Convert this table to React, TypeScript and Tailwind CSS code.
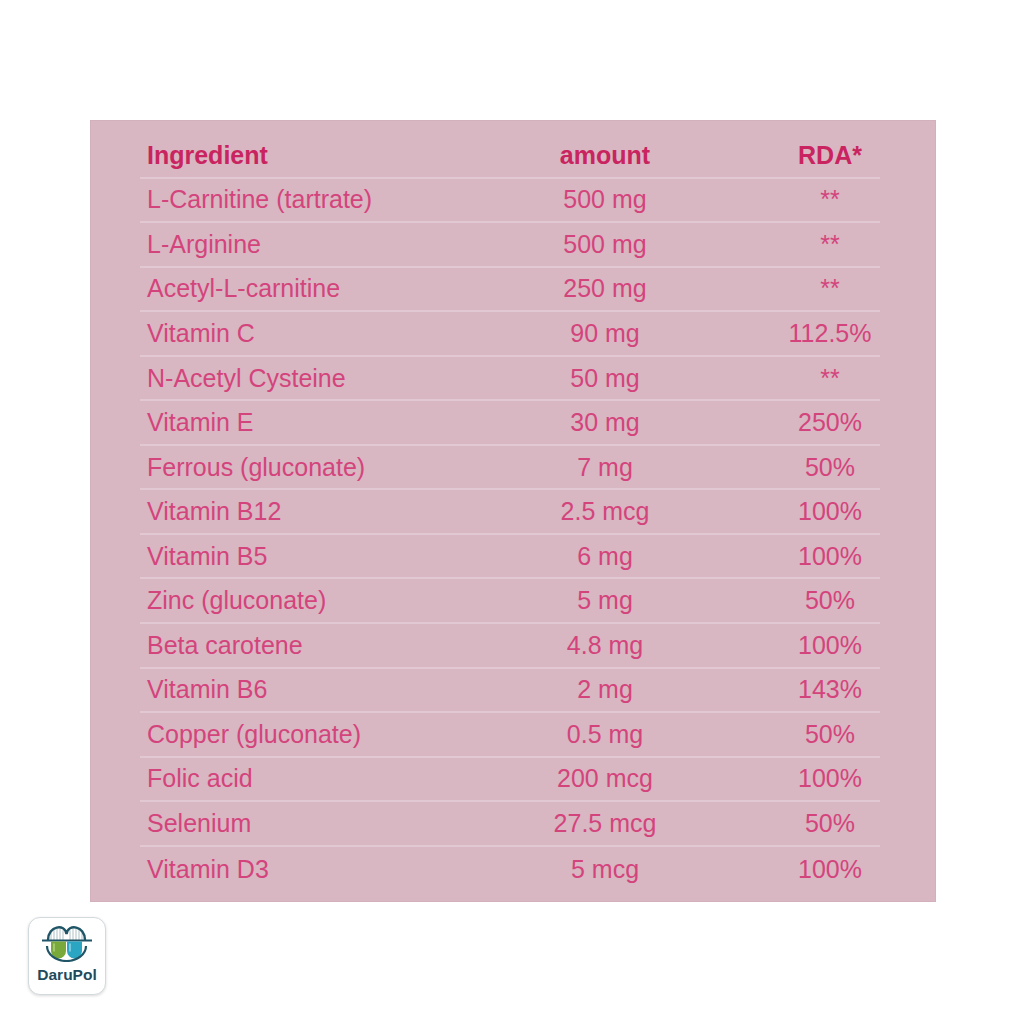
const rows: [string, string, string][] = [
  ["L-Carnitine (tartrate)", "500 mg", "**"],
  ["L-Arginine", "500 mg", "**"],
  ["Acetyl-L-carnitine", "250 mg", "**"],
  ["Vitamin C", "90 mg", "112.5%"],
  ["N-Acetyl Cysteine", "50 mg", "**"],
  ["Vitamin E", "30 mg", "250%"],
  ["Ferrous (gluconate)", "7 mg", "50%"],
  ["Vitamin B12", "2.5 mcg", "100%"],
  ["Vitamin B5", "6 mg", "100%"],
  ["Zinc (gluconate)", "5 mg", "50%"],
  ["Beta carotene", "4.8 mg", "100%"],
  ["Vitamin B6", "2 mg", "143%"],
  ["Copper (gluconate)", "0.5 mg", "50%"],
  ["Folic acid", "200 mcg", "100%"],
  ["Selenium", "27.5 mcg", "50%"],
  ["Vitamin D3", "5 mcg", "100%"],
];

function Row({ cells, head, last }: { cells: [string, string, string]; head?: boolean; last?: boolean }) {
  return (
    <div
      className={`flex items-center h-[44.56px] w-[740px] ${last ? "" : "border-b-2 border-[#e1c8d2]"} ${
        head ? "font-bold text-[#c9245f]" : "text-[#d4447c]"
      }`}
    >
      <div className="w-[390px] pl-[7px] whitespace-nowrap">{cells[0]}</div>
      <div className="w-[150px] text-center whitespace-nowrap">{cells[1]}</div>
      <div className="w-[100px] ml-[100px] text-center whitespace-nowrap">{cells[2]}</div>
    </div>
  );
}

function Logo() {
  const cables = [10, 13, 16, 19, 22, 29, 32, 35, 38, 41];
  return (
    <div className="w-[78px] h-[78px] rounded-[12px] bg-white border border-[#d3dadd] shadow-[0_1px_3px_rgba(0,0,0,0.15)] flex flex-col items-center pt-[6px]">
      <svg width="52" height="38" viewBox="0 0 52 38">
        {cables.map((x) => {
          const c = x < 25.5 ? 16.25 : 34.75;
          const top = 4 + ((x - c) * (x - c)) / 14;
          return <path key={x} d={`M${x} 16 V${top}`} stroke="#9aaeb4" strokeWidth="0.8" />;
        })}
        <path d="M7 16 C7 2 24 -1 25.5 10 C27 -1 44 2 44 16" fill="none" stroke="#1f5566" strokeWidth="2.4" />
        <path d="M1 16.5 H51" stroke="#1f5566" strokeWidth="2" />
        <path d="M10 17.5 V27 A7.5 7.5 0 0 0 25 27 V17.5 Z" fill="#78a93a" />
        <path d="M26 17.5 V27 A7.5 7.5 0 0 0 41 27 V17.5 Z" fill="#2aa6c3" />
        <path d="M13 20 V27" stroke="#b7d48a" strokeWidth="1.4" strokeLinecap="round" />
        <path d="M29 20 V27" stroke="#98d8e8" strokeWidth="1.4" strokeLinecap="round" />
        <path d="M6 22 A19.5 15 0 0 0 45 22" fill="none" stroke="#1f5566" strokeWidth="2.2" />
      </svg>
      <div className="font-['Liberation_Sans',Arial,sans-serif] font-bold text-[15.5px] leading-none text-[#1e4b5c] mt-[5px]">
        DaruPol
      </div>
    </div>
  );
}

export default function App() {
  return (
    <div className="w-[1024px] h-[1024px] bg-white font-['Liberation_Sans',Arial,sans-serif] text-[25px] leading-none flex flex-col">
      <div className="mt-[120px] ml-[90px] w-[846px] h-[782px] bg-[#d8b6c2] border border-[#d2b0bc] pt-[13px] pl-[49px]">
        <Row cells={["Ingredient", "amount", "RDA*"]} head />
        {rows.map((r, i) => (
          <Row key={r[0]} cells={r} last={i === rows.length - 1} />
        ))}
      </div>
      <div className="ml-[28px] mt-[15px]">
        <Logo />
      </div>
    </div>
  );
}
